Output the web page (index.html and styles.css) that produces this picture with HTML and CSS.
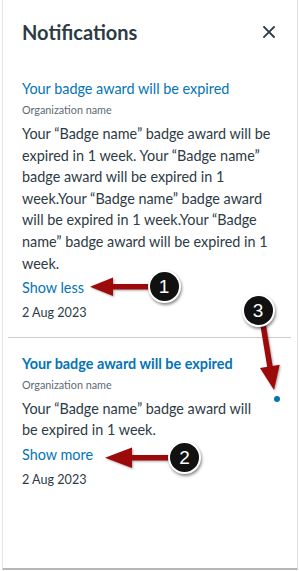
FILE: index.html
```html
<!DOCTYPE html>
<html lang="en">
<head>
<meta charset="utf-8">
<title>Notifications</title>
<link rel="stylesheet" href="styles.css">
</head>
<body>
<div class="panel">
  <div class="header">
    <h1 class="heading">Notifications</h1>
    <button class="close" aria-label="Close">
      <svg width="12" height="12" viewBox="0 0 12 12"><path d="M1 1 L11 11 M11 1 L1 11" stroke="#2d3b45" stroke-width="1.8" stroke-linecap="square"/></svg>
    </button>
  </div>
  <div class="item">
    <div class="content">
      <a class="title" href="#">Your badge award will be expired</a>
      <div class="org">Organization name</div>
      <p class="body">Your “Badge name” badge award will be expired in 1 week. Your “Badge name” badge award will be expired in 1 week.Your “Badge name” badge award will be expired in 1 week.Your “Badge name” badge award will be expired in 1 week.</p>
      <a class="toggle" href="#">Show less</a>
      <div class="date">2 Aug 2023</div>
    </div>
  </div>
  <div class="item unread">
    <div class="content">
      <a class="title" href="#">Your badge award will be expired</a>
      <div class="org">Organization name</div>
      <p class="body">Your “Badge name” badge award will be expired in 1 week.</p>
      <a class="toggle" href="#">Show more</a>
      <div class="date">2 Aug 2023</div>
    </div>
    <span class="dot"></span>
  </div>
</div>

<svg class="arrows" width="299" height="571" viewBox="0 0 299 571">
  <g fill="#9c0a0a" stroke="none">
    <rect x="112" y="284" width="38" height="5.5"/>
    <polygon points="90,286.7 113,277.5 113,296"/>
    <rect x="131" y="455" width="42" height="5.5"/>
    <polygon points="105,457.7 132,447.5 132,468"/>
    <polygon points="260,368.1 274,390 279.7,364.7"/>
  </g>
  <line x1="262.3" y1="320" x2="270" y2="367" stroke="#9c0a0a" stroke-width="5.5"/>
</svg>
<div class="badge b1">1</div>
<div class="badge b2">2</div>
<div class="badge b3">3</div>
</body>
</html>
```
FILE: styles.css
```css
html, body {
  margin: 0;
  padding: 0;
  background: #ffffff;
}
body {
  width: 299px;
  height: 571px;
  overflow: hidden;
  position: relative;
  font-family: Lato, "Noto Sans", sans-serif;
  color: #2d3b45;
}
.panel {
  box-sizing: border-box;
  width: 296px;
  height: 570px;
  margin-left: 2px;
  padding: 0 6px 0 5px;
  border-left: 1px solid #e2e4e6;
  border-right: 1px solid #dcdfe1;
  border-bottom: 2px solid #b5b8ba;
  background: #fff;
}
.header {
  display: flex;
  align-items: center;
  justify-content: space-between;
  padding: 19.6px 16px 20px 14px;
}
.heading {
  margin: 0;
  font-size: 20px;
  line-height: 24px;
  font-weight: 700;
  color: #2d3b45;
}
.close {
  border: 0;
  background: none;
  padding: 0;
  width: 12px;
  height: 12px;
  display: block;
}
.close svg { display: block; }
.item {
  display: flex;
  align-items: flex-start;
  padding: 14.4px 6px 14.4px 14px;
}
.item + .item {
  border-top: 1px solid #c7cdd1;
  padding-top: 14.6px;
}
.content {
  flex: 1;
  min-width: 0;
  display: flex;
  flex-direction: column;
  align-items: flex-start;
}
.title {
  font-size: 14.4px;
  line-height: 21.6px;
  color: #0374b5;
  text-decoration: none;
}
.unread .title { font-weight: 700; }
.org {
  margin-top: 2.1px;
  font-size: 10.8px;
  line-height: 16px;
  color: #5c6b75;
}
.body {
  margin: 5.3px 0 0 0;
  font-size: 14.4px;
  line-height: 21.6px;
  color: #2d3b45;
}
.toggle {
  margin-top: 2.8px;
  font-size: 14.4px;
  line-height: 21.6px;
  color: #0374b5;
  text-decoration: none;
}
.date {
  margin-top: 5.5px;
  font-size: 12.6px;
  line-height: 18.9px;
  color: #2d3b45;
}
.dot {
  flex: none;
  width: 6px;
  height: 6px;
  border-radius: 50%;
  background: #0374b5;
  margin: 43px 5px 0 18px;
}
.arrows {
  position: absolute;
  left: 0;
  top: 0;
  filter: drop-shadow(1px 1.5px 1px rgba(0,0,0,0.35));
}
.badge {
  position: absolute;
  box-sizing: border-box;
  width: 33px;
  height: 33px;
  border-radius: 50%;
  background: #111;
  border: 2px solid #fff;
  box-shadow: 1px 2px 3px rgba(0,0,0,0.45);
  color: #fff;
  font-family: "Liberation Sans", Arial, sans-serif;
  font-size: 19px;
  line-height: 29px;
  text-align: center;
}
.b1 { left: 147.5px; top: 269.5px; }
.b2 { left: 168px; top: 441px; }
.b3 { left: 241.5px; top: 294px; }
```
